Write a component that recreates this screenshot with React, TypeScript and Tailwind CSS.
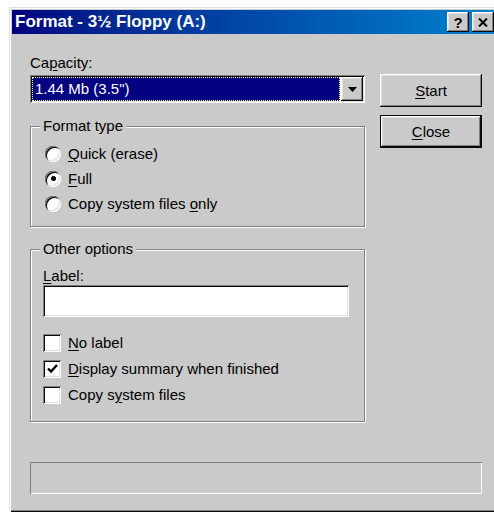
import type { ReactNode } from 'react';

// classic 3D edges, drawn with stacked inset shadows
const raised =
  'shadow-[inset_-1px_-1px_#0a0a0a,inset_1px_1px_#ffffff,inset_-2px_-2px_#808080,inset_2px_2px_#dfdfdf]';
const sunken =
  'shadow-[inset_1px_1px_#808080,inset_-1px_-1px_#ffffff,inset_2px_2px_#0a0a0a,inset_-2px_-2px_#dfdfdf]';

function Key({ children }: { children: ReactNode }) {
  return <span className="underline decoration-1 underline-offset-[2px]">{children}</span>;
}

function GroupBox({ title, className, children }: { title: string; className: string; children: ReactNode }) {
  return (
    <div
      className={`relative border border-[#808080] shadow-[1px_1px_0_#ffffff,inset_1px_1px_0_#ffffff] ${className}`}
    >
      <span className="absolute left-[9px] -top-[10px] bg-[#cacaca] px-[3px] leading-[18px]">{title}</span>
      {children}
    </div>
  );
}

function Radio({ checked, children }: { checked?: boolean; children: ReactNode }) {
  return (
    <div className="flex h-[25px] items-center gap-[7px]">
      <div className={`flex h-[16px] w-[16px] items-center justify-center rounded-full bg-white ${sunken}`}>
        {checked && <div className="h-[5px] w-[5px] rounded-full bg-black" />}
      </div>
      <span>{children}</span>
    </div>
  );
}

function Checkbox({ checked, children }: { checked?: boolean; children: ReactNode }) {
  return (
    <div className="flex h-[26px] items-center gap-[7px]">
      <div className={`flex h-[18px] w-[18px] items-center justify-center bg-white ${sunken}`}>
        {checked && (
          <svg width="11" height="10" viewBox="0 0 11 10">
            <path d="M1 4.5 L4 7.5 L10 1" fill="none" stroke="#000" strokeWidth="2.4" />
          </svg>
        )}
      </div>
      <span>{children}</span>
    </div>
  );
}

function TitleButton({ children }: { children: ReactNode }) {
  return (
    <div className={`flex h-[20px] w-[22px] items-center justify-center bg-[#cacaca] ${raised}`}>{children}</div>
  );
}

export default function App() {
  return (
    <div className="h-screen w-screen overflow-hidden bg-white pl-[9px] pt-[7px] font-['Liberation_Sans',Arial,sans-serif] text-[15px] leading-[18px] text-black">
      <div className="w-[500px] bg-[#cacaca] p-[3px] shadow-[inset_1px_1px_#dfdfdf,inset_2px_2px_#ffffff,inset_-1px_-1px_#0a0a0a,inset_-2px_-2px_#808080]">
        {/* title bar, runs off the right edge */}
        <div className="flex h-[24px] items-center bg-gradient-to-r from-[#000080] to-[#1084d0] pl-[3px] pr-[12px]">
          <span className="flex-1 text-[17px] font-bold leading-[24px] text-white">Format - 3½ Floppy (A:)</span>
          <div className="flex gap-[3px]">
            <TitleButton>
              <span className="text-[15px] font-bold leading-none">?</span>
            </TitleButton>
            <TitleButton>
              <svg width="10" height="9" viewBox="0 0 10 9">
                <path d="M1 0.5 L9 8.5 M9 0.5 L1 8.5" stroke="#000" strokeWidth="2" />
              </svg>
            </TitleButton>
          </div>
        </div>

        <div className="pb-[15px] pl-[18px] pt-[20px]">
          <div className="flex">
            <div className="w-[335px]">
              <div>
                Ca<Key>p</Key>acity:
              </div>
              <div className={`mt-[3px] flex h-[28px] bg-white p-[2px] ${sunken}`}>
                <div className="mr-[1px] flex flex-1 items-center border border-dotted border-[#ffff80] bg-[#000080] pl-[2px] text-white">
                  1.44 Mb (3.5")
                </div>
                <div className={`flex w-[22px] items-center justify-center bg-[#cacaca] ${raised}`}>
                  <svg width="9" height="5" viewBox="0 0 9 5">
                    <path d="M0 0 H9 L4.5 5 Z" fill="#000" />
                  </svg>
                </div>
              </div>

              <GroupBox title="Format type" className="mt-[23px] h-[101px] pl-[14px] pt-[14px]">
                <Radio>
                  <Key>Q</Key>uick (erase)
                </Radio>
                <Radio checked>
                  <Key>F</Key>ull
                </Radio>
                <Radio>
                  Copy system files <Key>o</Key>nly
                </Radio>
              </GroupBox>

              <GroupBox title="Other options" className="mt-[22px] h-[173px] pl-[12px] pt-[17px]">
                <div>
                  <Key>L</Key>abel:
                </div>
                <div className={`h-[32px] w-[306px] bg-white ${sunken}`} />
                <div className="mt-[13px]">
                  <Checkbox>
                    <Key>N</Key>o label
                  </Checkbox>
                  <Checkbox checked>
                    <Key>D</Key>isplay summary when finished
                  </Checkbox>
                  <Checkbox>
                    Copy s<Key>y</Key>stem files
                  </Checkbox>
                </div>
              </GroupBox>
            </div>

            <div className="ml-[15px] flex w-[102px] flex-col gap-[8px] pt-[20px]">
              <button className={`h-[33px] bg-[#cacaca] ${raised}`}>
                <Key>S</Key>tart
              </button>
              <button className="h-[33px] bg-[#cacaca] shadow-[inset_0_0_0_1px_#0a0a0a,inset_-2px_-2px_#0a0a0a,inset_2px_2px_#ffffff,inset_-3px_-3px_#808080,inset_3px_3px_#dfdfdf]">
                <Key>C</Key>lose
              </button>
            </div>
          </div>

          {/* progress bar */}
          <div className="mt-[40px] h-[32px] w-[452px] shadow-[inset_1px_1px_#808080,inset_-1px_-1px_#ffffff]" />
        </div>
      </div>
    </div>
  );
}
